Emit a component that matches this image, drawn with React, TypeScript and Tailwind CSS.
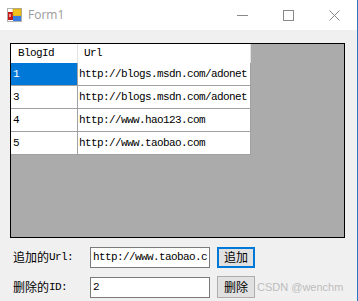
import React from "react"

const mono = "font-['Liberation_Mono','Noto_Sans_CJK_SC',monospace] text-[11px] tracking-[-0.6px]"
const cjk = "font-['Noto_Sans_CJK_SC',sans-serif] text-[12px]"

const rows = [
  { id: "1", url: "http://blogs.msdn.com/adonet", selected: true },
  { id: "3", url: "http://blogs.msdn.com/adonet" },
  { id: "4", url: "http://www.hao123.com" },
  { id: "5", url: "http://www.taobao.com" },
]

function AppIcon() {
  return (
    <svg width="15" height="14" viewBox="0 0 15 14">
      <rect x="0.5" y="0.5" width="14" height="13" fill="#fff" stroke="#b0b0b0" />
      <rect x="1" y="4" width="5" height="8" fill="#c41a1a" />
      <rect x="6" y="1" width="8" height="7" fill="#f3c21c" stroke="#c89a10" strokeWidth="0.6" />
      <rect x="6" y="8" width="8" height="5" fill="#3a7fe0" />
      <rect x="2" y="6" width="2" height="3" fill="#f29090" />
    </svg>
  )
}

function TitleBar() {
  return (
    <div className="flex items-center h-[30px] bg-white">
      <div className="ml-[7px] flex items-center">
        <AppIcon />
      </div>
      <span className="ml-[6px] text-[12px] text-[#9a9a9a] font-['Open_Sans',sans-serif]">Form1</span>
      <div className="ml-auto flex items-center h-full">
        <div className="w-[46px] h-full flex items-center justify-center">
          <svg width="11" height="11" viewBox="0 0 11 11">
            <line x1="0" y1="5.5" x2="11" y2="5.5" stroke="#888" strokeWidth="1" />
          </svg>
        </div>
        <div className="w-[46px] h-full flex items-center justify-center">
          <svg width="11" height="11" viewBox="0 0 11 11">
            <rect x="0.5" y="0.5" width="10" height="10" fill="none" stroke="#888" strokeWidth="1" />
          </svg>
        </div>
        <div className="w-[46px] h-full flex items-center justify-center">
          <svg width="11" height="11" viewBox="0 0 11 11">
            <path d="M0.5 0.5 L10.5 10.5 M10.5 0.5 L0.5 10.5" stroke="#888" strokeWidth="1" />
          </svg>
        </div>
      </div>
    </div>
  )
}

function Grid() {
  return (
    <div className="ml-[10px] w-[335px] h-[195px] border border-black bg-[#ababab]">
      <div className="w-[240px]">
        <div className="flex h-[19px] bg-white text-black">
          <div className={`w-[67px] border-r border-[#e3e3e3] pl-[7px] flex items-center ${mono}`}>BlogId</div>
          <div className={`w-[173px] border-r border-[#e3e3e3] pl-[6px] flex items-center ${mono}`}>Url</div>
        </div>
        {rows.map((r) => (
          <div key={r.id + r.url} className="flex h-[23px] border-b border-[#a0a0a0] bg-white text-black">
            <div
              className={[
                "w-[67px] border-r border-[#a0a0a0] pl-[2px] flex items-center",
                mono,
                r.selected ? "bg-[#0078d7] text-white" : "",
              ].join(" ")}
            >
              {r.id}
            </div>
            <div className={`w-[173px] border-r border-[#a0a0a0] pl-[1px] flex items-center whitespace-nowrap overflow-hidden ${mono}`}>
              {r.url}
            </div>
          </div>
        ))}
      </div>
    </div>
  )
}

function Label({ cn, en }: { cn: string; en: string }) {
  return (
    <div className="w-[77px] ml-[13px] flex items-center text-black">
      <span className={cjk}>{cn}</span>
      <span className={mono}>{en}</span>
    </div>
  )
}

export default function App() {
  return (
    <div className="w-[358px] h-[301px] bg-[#f0f0f0] border-r border-[#2b79c4] overflow-hidden">
      <TitleBar />
      <div className="pt-[13px]">
        <Grid />

        <div className="mt-[8px] flex items-center h-[22px]">
          <Label cn="追加的" en="Url:" />
          <div className={`w-[120px] h-[21px] border border-[#7a7a7a] bg-white pl-[2px] flex items-center overflow-hidden whitespace-nowrap text-black ${mono}`}>
            http://www.taobao.c
          </div>
          <button className={`ml-[7px] w-[38px] h-[21px] border-2 border-[#0078d7] bg-[#e1e1e1] text-black flex items-center justify-center ${cjk}`}>
            追加
          </button>
        </div>

        <div className="mt-[8px] flex items-center h-[22px]">
          <Label cn="删除的" en="ID:" />
          <div className={`w-[120px] h-[21px] border border-[#7a7a7a] bg-white pl-[2px] flex items-center text-black ${mono}`}>
            2
          </div>
          <button className={`ml-[7px] w-[38px] h-[22px] border border-[#adadad] bg-[#e1e1e1] text-black flex items-center justify-center ${cjk}`}>
            删除
          </button>
          <span className="ml-[2px] text-[11px] text-[#bdbdbd] font-['Liberation_Sans',sans-serif] whitespace-nowrap">
            CSDN @wenchm
          </span>
        </div>
      </div>
    </div>
  )
}
